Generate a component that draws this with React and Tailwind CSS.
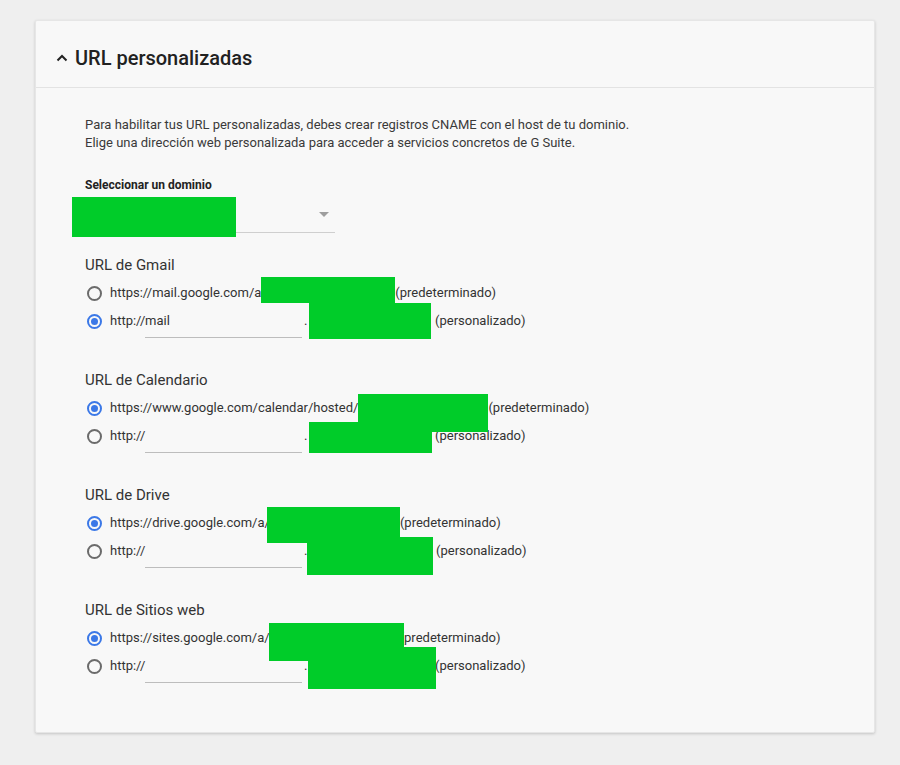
import React from 'react';

const Green = ({ w, top, h, cover, left = 0 }) => (
  <span className="relative inline-block h-full shrink-0" style={{ width: w }}>
    <span className="absolute z-10 bg-[#00cc29]" style={{ top, left, height: h, width: cover || w }} />
  </span>
);

const Radio = ({ checked }) =>
  checked ? (
    <span className="ml-[2px] mr-[8px] flex h-[15px] w-[15px] shrink-0 items-center justify-center rounded-full border-2 border-[#3b78e7]">
      <span className="h-[7px] w-[7px] rounded-full bg-[#3b78e7]" />
    </span>
  ) : (
    <span className="ml-[2px] mr-[8px] h-[15px] w-[15px] shrink-0 rounded-full border-2 border-[#6b6b6b]" />
  );

const DefaultRow = ({ checked, url, green }) => (
  <div className="flex h-7 items-center">
    <Radio checked={checked} />
    <span className="whitespace-nowrap">{url}</span>
    <Green {...green} />
    <span className="whitespace-nowrap">(predeterminado)</span>
  </div>
);

const CustomRow = ({ checked, value, green, gap }) => (
  <div className="flex h-7 items-center">
    <Radio checked={checked} />
    <span className="w-[35px] shrink-0 whitespace-nowrap">http://</span>
    <div className="flex h-[34px] w-[157px] shrink-0 items-center border-b border-[#bdbdbd]">{value}</div>
    <span className="ml-[2px] w-[5px] shrink-0">.</span>
    <Green {...green} />
    <span className="whitespace-nowrap" style={{ marginLeft: gap }}>(personalizado)</span>
  </div>
);

const Section = ({ title, last, children }) => (
  <div className={last ? 'h-[80px]' : 'h-[115px]'}>
    <div className="mb-1 flex h-5 items-center text-[15px] text-[#333]">{title}</div>
    {children}
  </div>
);

export default function App() {
  return (
    <div className="min-h-[765px] bg-[#efefef] pt-5 pl-[35px] font-['Roboto',sans-serif]">
      <div className="w-[840px] rounded-[2px] border border-[#e6e6e6] bg-[#f8f8f8] shadow-[0_1px_3px_rgba(0,0,0,0.18)]">
        <div className="flex h-[67px] items-center border-b border-[#e3e3e3] pl-[20px] pt-[7px]">
          <svg width="12" height="12" viewBox="0 0 12 12" className="mr-[7px]">
            <path d="M1.5 8.5 L6 4 L10.5 8.5" fill="none" stroke="#222" strokeWidth="2" />
          </svg>
          <h2 className="text-[20px] font-medium text-[#212121]">URL personalizadas</h2>
        </div>
        <div className="pl-[49px] pt-[28px] pb-[52px] text-[13px] text-[#333]">
          <p className="leading-[18px] text-[#3a3a3a]">
            Para habilitar tus URL personalizadas, debes crear registros CNAME con el host de tu dominio.
            <br />
            Elige una dirección web personalizada para acceder a servicios concretos de G Suite.
          </p>
          <div className="mt-6 flex h-[18px] items-center text-[12px] font-bold text-[#222]">Seleccionar un dominio</div>
          <div className="relative mt-[3px] flex h-[36px] w-[250px] items-center justify-end border-b border-[#cfcfcf] pr-[6px]">
            <span className="absolute left-[-13px] top-0 h-[40px] w-[164px] bg-[#00cc29]" />
            <svg width="10" height="5" viewBox="0 0 10 5">
              <path d="M0 0 L10 0 L5 5 Z" fill="#9e9e9e" />
            </svg>
          </div>
          <div className="mt-[22px]">
            <Section title="URL de Gmail">
              <DefaultRow url="https://mail.google.com/a" green={{ w: 134, top: -2, h: 26 }} />
              <CustomRow value="mail" green={{ w: 122, top: -4, h: 36 }} gap={4} checked />
            </Section>
            <Section title="URL de Calendario">
              <DefaultRow checked url="https://www.google.com/calendar/hosted/" green={{ w: 130, top: 0, h: 38 }} />
              <CustomRow green={{ w: 123, top: 0, h: 31 }} gap={3} />
            </Section>
            <Section title="URL de Drive">
              <DefaultRow checked url="https://drive.google.com/a/" green={{ w: 130, top: -2, h: 36, left: -3, cover: 133 }} />
              <CustomRow green={{ w: 124, top: 0, h: 38, left: -2, cover: 126 }} gap={3} />
            </Section>
            <Section title="URL de Sitios web" last>
              <DefaultRow checked url="https://sites.google.com/a/" green={{ w: 130, top: -1, h: 38, left: -1, cover: 135 }} />
              <CustomRow green={{ w: 126, top: -5, h: 42, left: -1, cover: 128 }} gap={0} />
            </Section>
          </div>
        </div>
      </div>
    </div>
  );
}
